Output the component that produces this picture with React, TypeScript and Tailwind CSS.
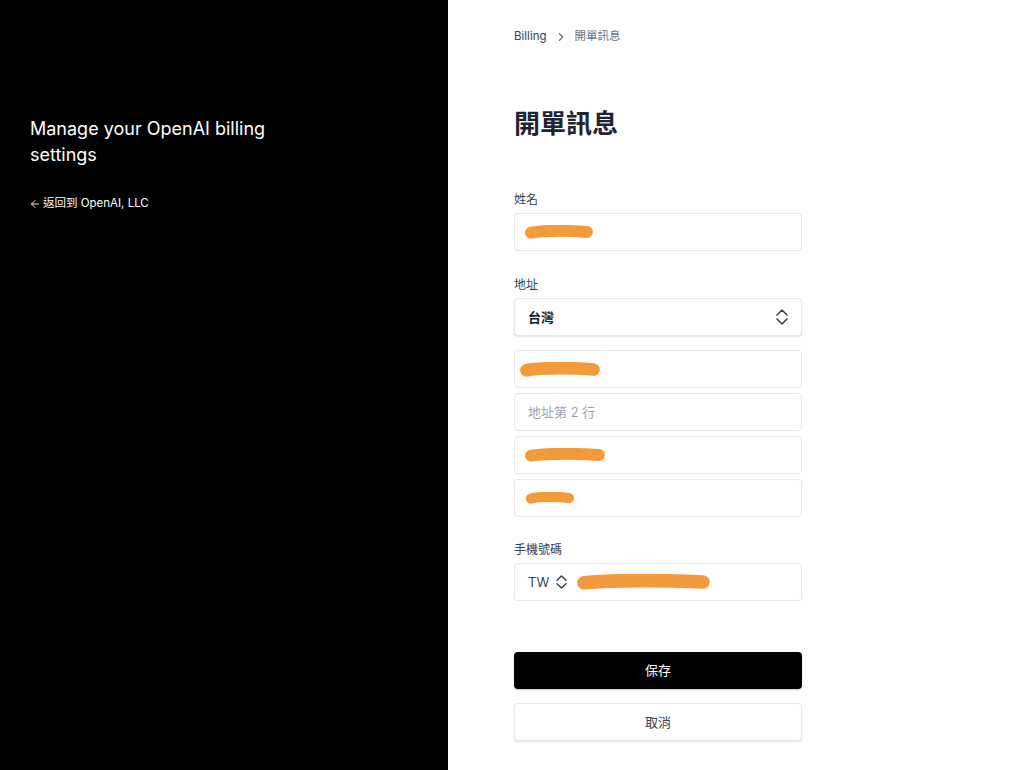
import { ChevronRight, ArrowLeft } from "lucide-react";

const font = { fontFamily: '"Inter", "Noto Sans CJK TC", sans-serif' };

// 手寫遮蔽筆劃
const Scribble = ({ w, h }: { w: number; h: number }) => (
  <svg width={w} height={h} viewBox={`0 0 ${w} ${h}`} className="block">
    <path
      d={`M ${h / 2} ${h * 0.55} C ${w * 0.3} ${h * 0.35}, ${w * 0.7} ${h * 0.4}, ${w - h / 2} ${h * 0.5}`}
      stroke="#f39b3a"
      strokeWidth={h * 0.85}
      strokeLinecap="round"
      fill="none"
    />
  </svg>
);

const UpDown = ({ w, h }: { w: number; h: number }) => (
  <svg width={w} height={h} viewBox={`0 0 ${w} ${h}`} fill="none" stroke="#374151" strokeWidth={1.5} strokeLinecap="round" strokeLinejoin="round">
    <path d={`M 1 ${h * 0.38} L ${w / 2} 1 L ${w - 1} ${h * 0.38}`} />
    <path d={`M 1 ${h * 0.62} L ${w / 2} ${h - 1} L ${w - 1} ${h * 0.62}`} />
  </svg>
);

const Box = ({ children, shadow }: { children?: React.ReactNode; shadow?: boolean }) => (
  <div
    className={`h-[38px] w-full rounded-[4px] border border-[#e5e7eb] bg-white flex items-center px-[13px] ${
      shadow ? "shadow-[0_1px_2px_rgba(0,0,0,0.12)]" : ""
    }`}
  >
    {children}
  </div>
);

export default function App() {
  return (
    <div className="flex min-h-[770px] w-full" style={font}>
      <aside className="w-[448px] shrink-0 bg-black text-white pl-[30px] pt-[116px]">
        <h1 className="text-[18px] leading-[26px] w-[260px]">Manage your OpenAI billing settings</h1>
        <a className="mt-[27px] flex items-center gap-[2px] text-[11.5px] text-white">
          <ArrowLeft size={12} strokeWidth={1.8} className="-ml-[1px]" />
          返回到 OpenAI, LLC
        </a>
      </aside>
      <main className="flex-1 bg-white pl-[66px] pt-[28px]">
        <div className="w-[288px]">
          <nav className="flex items-center gap-[7px] text-[11.5px]">
            <span className="text-[#374151]">Billing</span>
            <ChevronRight size={14} className="text-[#6b7280]" />
            <span className="text-[#6b7280]">開單訊息</span>
          </nav>
          <h2 className="mt-[61px] text-[26px] leading-[36px] font-bold text-[#1f2433]">開單訊息</h2>

          <label className="mt-[49px] block text-[12px] text-[#374151]">姓名</label>
          <div className="mt-[4px]">
            <Box>
              <div className="-ml-[4px]">
                <Scribble w={70} h={14} />
              </div>
            </Box>
          </div>

          <label className="mt-[25px] block text-[12px] text-[#374151]">地址</label>
          <div className="mt-[4px]">
            <Box shadow>
              <span className="flex-1 text-[13px] font-semibold text-[#111827]">台灣</span>
              <UpDown w={12} h={16} />
            </Box>
          </div>
          <div className="mt-[14px] flex flex-col gap-[5px]">
            <Box>
              <div className="-ml-[9px]">
                <Scribble w={82} h={15} />
              </div>
            </Box>
            <Box>
              <span className="text-[13px] text-[#9ca3af]">地址第 2 行</span>
            </Box>
            <Box>
              <div className="-ml-[4px]">
                <Scribble w={82} h={14} />
              </div>
            </Box>
            <Box>
              <div className="-ml-[3px]">
                <Scribble w={50} h={12} />
              </div>
            </Box>
          </div>

          <label className="mt-[24px] block text-[12px] text-[#374151]">手機號碼</label>
          <div className="mt-[4px]">
            <Box>
              <span className="text-[13px] text-[#374151]">TW</span>
              <div className="ml-[7px]">
                <UpDown w={11} h={14} />
              </div>
              <div className="ml-[9px]">
                <Scribble w={135} h={16} />
              </div>
            </Box>
          </div>

          <button className="mt-[51px] h-[37px] w-full rounded-[4px] bg-black text-white text-[13px] shadow-[0_1px_2px_rgba(0,0,0,0.2)]">
            保存
          </button>
          <button className="mt-[14px] h-[38px] w-full rounded-[4px] border border-[#e5e7eb] bg-white text-[13px] text-[#374151] shadow-[0_1px_2px_rgba(0,0,0,0.1)]">
            取消
          </button>
        </div>
      </main>
    </div>
  );
}
